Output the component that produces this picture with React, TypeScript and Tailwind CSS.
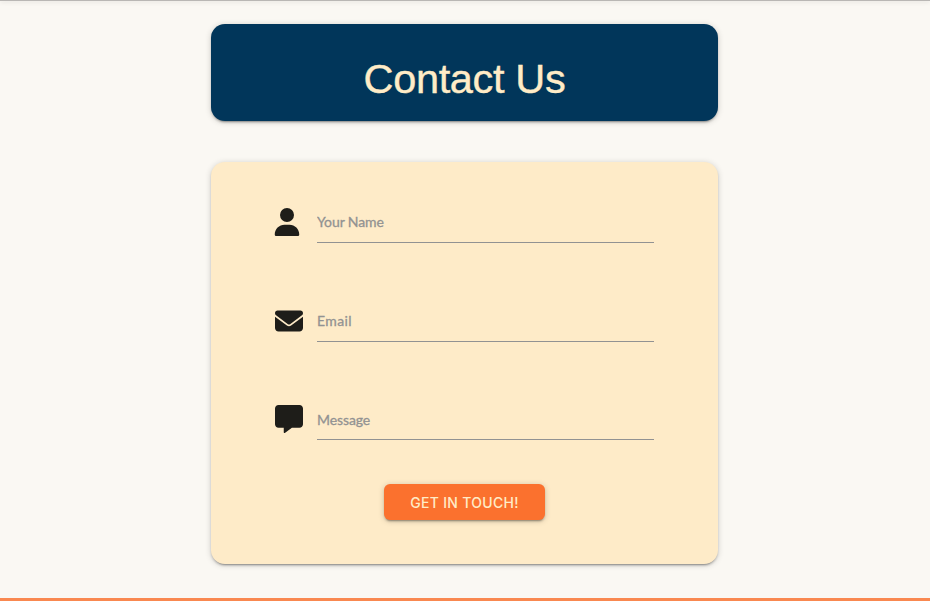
import { FaEnvelope, FaMessage, FaUser } from "react-icons/fa6";
import type { IconType } from "react-icons";

const shadow =
  "shadow-[0px_3px_1px_-2px_rgba(0,0,0,0.2),0px_2px_2px_0px_rgba(0,0,0,0.14),0px_1px_6px_0px_rgba(0,0,0,0.18)]";

type FieldProps = {
  icon: IconType;
  label: string;
  text: string;
  row: string;
  iconBox: string;
};

function Field({ icon: Icon, label, text, row, iconBox }: FieldProps) {
  return (
    <div className={`flex ${row}`}>
      <div className={`w-[42px] shrink-0 ${iconBox}`}>
        <Icon className="h-7 w-7 text-[#1e1d19]" />
      </div>
      <input
        aria-label={label}
        placeholder={label}
        className={`h-9 w-[337px] border-b border-[#929292] bg-transparent font-['Lato',sans-serif] text-sm outline-none [-webkit-text-stroke:0.3px_#929292] placeholder:text-[#929292] placeholder:opacity-100 ${text}`}
      />
    </div>
  );
}

export default function App() {
  return (
    <div className="flex h-[601px] flex-col items-center overflow-hidden border-b-3 border-[#f98850] bg-[#faf8f3]">
      <div className="h-px w-full shrink-0 bg-[#b9b7b4] shadow-[0_1px_4px_rgba(0,0,0,0.2)]" />
      <header
        className={`mt-[23px] mr-px flex h-[97px] w-[507px] shrink-0 items-center justify-center rounded-[14px] bg-[#01365a] pt-[13px] ${shadow}`}
      >
        <h1 className="font-['Liberation_Sans',Arial,sans-serif] text-[41.5px] leading-none tracking-[-0.35px] text-[#ffecc7] [-webkit-text-stroke:0.4px_#ffecc7]">
          Contact Us
        </h1>
      </header>
      <form
        className={`mt-[41px] mr-px flex h-[402px] w-[507px] shrink-0 flex-col rounded-[14px] bg-[#feebc8] pt-[45px] pl-16 ${shadow}`}
      >
        <Field icon={FaUser} label="Your Name" text="pb-1.5 tracking-[-0.1px]" row="h-[99px]" iconBox="-ml-0.5 mr-0.5 pt-[0.5px]" />
        <Field icon={FaEnvelope} label="Email" text="pb-1.5 tracking-[0.4px]" row="h-[98px]" iconBox="pt-[0.5px]" />
        <Field icon={FaMessage} label="Message" text="pb-1 tracking-[-0.1px]" row="h-[80px]" iconBox="pt-[1.3px]" />
        <button
          type="button"
          className={`ml-[109px] h-9 w-[161px] rounded-md bg-[#fb712e] pt-0.5 font-['Inter',sans-serif] text-sm font-medium tracking-[0.3px] text-[#ffecc7] ${shadow}`}
        >
          GET IN TOUCH!
        </button>
      </form>
    </div>
  );
}
